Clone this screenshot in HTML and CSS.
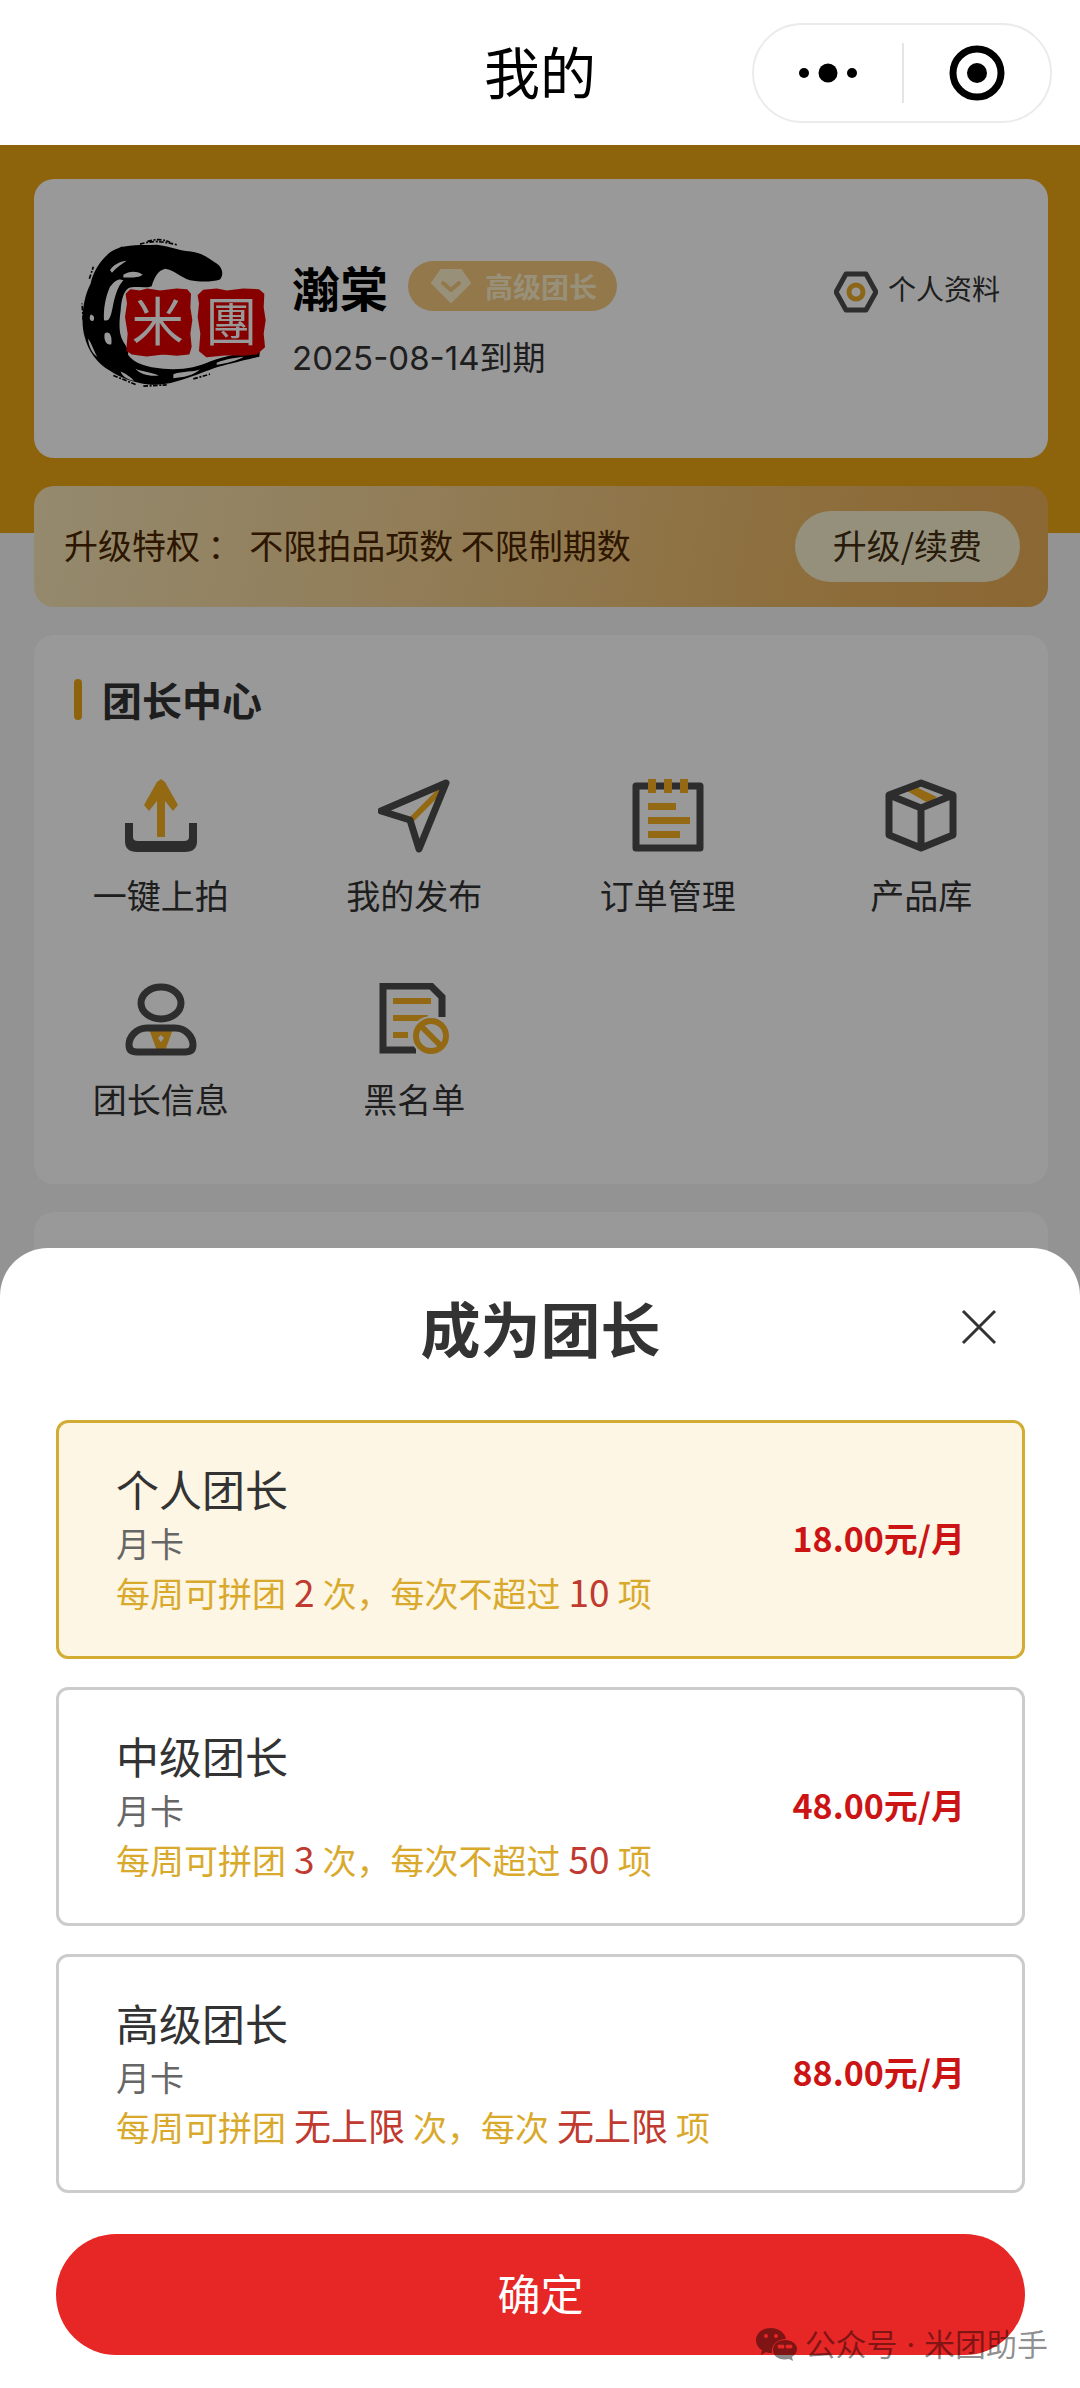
FILE: index.html
```html
<!DOCTYPE html>
<html lang="zh-CN">
<head>
<meta charset="utf-8">
<meta name="viewport" content="width=device-width, initial-scale=1">
<title>我的</title>
<link rel="stylesheet" href="styles.css">
</head>
<body>
<header class="nav">
  <h1 class="nav-title">我的</h1>
  <div class="capsule">
    <button class="capsule-btn" type="button" aria-label="更多">
      <svg width="60" height="20" viewBox="0 0 60 20"><circle cx="6" cy="10" r="5"/><circle cx="30" cy="10" r="9.5"/><circle cx="54" cy="10" r="5"/></svg>
    </button>
    <button class="capsule-btn" type="button" aria-label="关闭小程序">
      <svg width="56" height="56" viewBox="0 0 56 56"><circle cx="28" cy="28" r="24" fill="none" stroke="#000" stroke-width="7"/><circle cx="28" cy="28" r="10"/></svg>
    </button>
  </div>
</header>

<div class="stage">
  <main class="page">
    <section class="card profile">
      <svg class="avatar" viewBox="60 46 558 459" role="img" aria-label="米团">
        <path d="M92 190C100 150 130 105 165 88C200 72 250 76 290 74C330 78 352 92 392 94C430 98 450 118 470 130C488 142 492 164 480 178C455 186 420 186 390 180C360 172 345 150 315 146C295 152 285 166 275 198C255 206 225 196 205 204C190 214 184 240 182 270C178 300 176 330 184 352C192 374 208 384 204 404C222 430 262 442 310 446C370 450 410 442 450 424C500 404 560 398 600 388L598 410C570 416 530 426 490 436C450 446 420 462 380 474C340 488 300 498 260 492C220 488 180 472 150 452C110 430 84 390 74 350C62 310 66 240 92 190Z"/>
        <path class="brush" d="M150 200C166 180 176 174 190 180C172 200 164 230 158 262C152 290 148 306 132 300C130 270 136 230 150 200ZM190 164C210 150 236 154 248 164C236 174 210 172 190 172ZM134 340C146 330 158 344 154 372C142 378 130 362 134 340ZM150 150C160 134 180 124 200 122C184 134 168 142 156 158ZM92 284C100 284 106 292 100 302C90 306 86 292 92 284ZM84 356C94 366 100 390 112 410C98 402 86 380 84 356ZM226 446C250 456 280 458 296 466C270 470 240 462 226 446ZM340 462C370 452 400 456 420 448C400 466 370 472 340 474ZM470 428C500 416 530 412 552 410C530 422 500 430 470 434ZM182 454C200 462 214 472 222 482C202 478 186 468 182 454Z"/>
        <path class="splash" d="M240 72Q290 56 350 74M262 64Q300 52 330 66M150 100L190 80M88 176L100 140M70 300L66 250M160 466L230 494M250 498L320 494M400 476L450 462"/>
        <path class="seal" d="M212 210L240 214L262 208L300 214L350 208L380 210L390 222L388 262L394 300L388 340L392 380L386 400L350 404L310 400L260 406L216 400L202 390L206 340L198 290L204 250L200 222Z"/>
        <path class="seal" d="M430 212L470 208L500 214L550 208L596 210L610 222L608 262L614 300L608 340L612 380L590 400L550 404L500 402L440 408L420 392L424 340L416 290L420 250L416 226Z"/>
        <text class="seal-text" x="293" y="364" font-size="156">米</text>
        <text class="seal-text" x="514" y="364" font-size="156">團</text>
      </svg>
      <div class="who">
        <div class="name-row">
          <strong class="name">瀚棠</strong>
          <span class="badge">
            <svg width="40" height="34" viewBox="0 0 40 34"><path d="M10 1H30L39 14L20 33L1 14Z" fill="currentColor" stroke="currentColor" stroke-width="2" stroke-linejoin="round"/><path d="M12 14L20 21L28 14" fill="none" stroke="#f3c97e" stroke-width="4" stroke-linecap="round" stroke-linejoin="round"/></svg>
            高级团长
          </span>
        </div>
        <p class="expiry">2025-08-14到期</p>
      </div>
      <a class="profile-link" href="#profile">
        <svg width="44" height="42" viewBox="0 0 44 42"><path d="M12 3H32L42 21L32 39H12L2 21Z" fill="none" stroke="#4d4d4f" stroke-width="5" stroke-linejoin="round"/><circle cx="22" cy="21" r="7" fill="none" stroke="#e9aa28" stroke-width="5"/></svg>
        <span class="profile-label">个人资料</span>
      </a>
    </section>

    <section class="upgrade">
      <p class="upgrade-text">升级特权 ： 不限拍品项数 不限制期数</p>
      <button class="upgrade-btn" type="button">升级/续费</button>
    </section>

    <section class="card center">
      <h2 class="section-title">团长中心</h2>
      <nav class="grid">
        <a class="tile" href="#upload">
          <svg class="icon" viewBox="0 0 72 74"><path class="gold" d="M36 0L40 3L53 26L48 32L40 22V58H32V22L24 32L19 26L32 3Z"/><path class="ink" d="M0 44H8V58Q8 62 13 62H59Q64 62 64 58V44H72V62Q72 73 60 73H12Q0 73 0 62Z"/></svg>
          一键上拍
        </a>
        <a class="tile" href="#posts">
          <svg class="icon" viewBox="0 0 72 74"><path class="gold-line thick" d="M33 41L63 11"/><path class="ink-line" d="M68 4L3 32L32 41L41 70Z"/></svg>
          我的发布
        </a>
        <a class="tile" href="#orders">
          <svg class="icon" viewBox="0 0 72 74"><path class="ink-line" d="M4 7H68V69H4Z"/><path class="gold" d="M16 0H24V14H16ZM32 0H40V14H32ZM48 0H56V14H48ZM16 24H44V31H16ZM16 38H58V45H16ZM16 52H48V59H16Z"/></svg>
          订单管理
        </a>
        <a class="tile" href="#products">
          <svg class="icon" viewBox="0 0 72 74"><path class="gold" d="M22 12L31 8L52 18L43 24Z"/><path class="ink-line" d="M36 4L68 16V56L36 69L4 56V16ZM4 16L36 29L68 16M36 29V69"/></svg>
          产品库
        </a>
        <a class="tile" href="#leader">
          <svg class="icon" viewBox="0 0 72 74"><path class="gold" fill-rule="evenodd" d="M24 46H48L40 68H32ZM36 52L33 55L36 59L39 55Z"/><ellipse class="ink-line" cx="36" cy="20" rx="20" ry="16"/><path class="ink-line" d="M4 62C4 54 11 45 22 45H50C61 45 68 54 68 62Q68 69 60 69H12Q4 69 4 62Z"/></svg>
          团长信息
        </a>
        <a class="tile" href="#blacklist">
          <svg class="icon" viewBox="0 0 72 74"><path class="ink-line square" d="M38 67H5V3H53L64 14V34"/><path class="gold-line thick" d="M15 18H53M15 35H50M15 52H30"/><circle cx="53" cy="53" r="20" fill="#fff"/><circle class="gold-line thick" cx="53" cy="53" r="15"/><path class="gold-line thick" d="M43 43L63 63"/></svg>
          黑名单
        </a>
      </nav>
    </section>

    <section class="card rest"></section>
  </main>

  <div class="mask">
    <form class="sheet" role="dialog" aria-labelledby="sheet-title">
      <header class="sheet-head">
        <h2 class="sheet-title" id="sheet-title">成为团长</h2>
        <button class="close" type="button" aria-label="关闭">
          <svg width="36" height="36" viewBox="0 0 36 36"><path d="M2 2L34 34M34 2L2 34" stroke="#333" stroke-width="3"/></svg>
        </button>
      </header>
      <div class="plans">
        <label class="plan">
          <input class="plan-input" type="radio" name="plan" checked>
          <span class="plan-info">
            <span class="plan-name">个人团长</span>
            <span class="plan-term">月卡</span>
            <span class="plan-desc">每周可拼团<b>2</b>次，每次不超过<b>10</b>项</span>
          </span>
          <strong class="price">18.00元/月</strong>
        </label>
        <label class="plan">
          <input class="plan-input" type="radio" name="plan">
          <span class="plan-info">
            <span class="plan-name">中级团长</span>
            <span class="plan-term">月卡</span>
            <span class="plan-desc">每周可拼团<b>3</b>次，每次不超过<b>50</b>项</span>
          </span>
          <strong class="price">48.00元/月</strong>
        </label>
        <label class="plan">
          <input class="plan-input" type="radio" name="plan">
          <span class="plan-info">
            <span class="plan-name">高级团长</span>
            <span class="plan-term">月卡</span>
            <span class="plan-desc">每周可拼团<b>无上限</b>次，每次<b>无上限</b>项</span>
          </span>
          <strong class="price">88.00元/月</strong>
        </label>
      </div>
      <button class="confirm" type="submit">确定</button>
    </form>
    <div class="watermark">
      <svg width="41" height="34" viewBox="0 0 41 34"><path fill="currentColor" fill-rule="evenodd" d="M15 0C23 0 29 5 30 11C21 11 15 17 16 25C14 25 12 25 10 24L5 27L6 22C2 20 0 16 0 12C0 5 7 0 15 0ZM10 6A2 2 0 1 0 10 10A2 2 0 1 0 10 6ZM20 6A2 2 0 1 0 20 10A2 2 0 1 0 20 6ZM29 12C36 12 41 16 41 21C41 24 39 27 36 29L37 33L33 31C23 33 17 28 17 22C17 16 22 12 29 12ZM25 17A2 2 0 1 0 25 20A2 2 0 1 0 25 17ZM33 17A2 2 0 1 0 33 20A2 2 0 1 0 33 17Z"/></svg>
      <span>公众号 · 米团助手</span>
    </div>
  </div>
</div>
</body>
</html>
```
FILE: styles.css
```css
* {
  box-sizing: border-box;
}

body {
  margin: 0;
  min-height: 100vh;
  display: flex;
  flex-direction: column;
  background: #f5f5f5;
  color: #333;
  font-family: "Noto Sans CJK SC", sans-serif;
  font-size: 34px;
  line-height: 50px;
}

h1,
h2,
p {
  margin: 0;
}

button {
  padding: 0;
  border: 0;
  background: none;
  color: inherit;
  font: inherit;
}

a {
  color: inherit;
  text-decoration: none;
}

svg {
  display: block;
  flex: none;
}

/* Top bar */
.nav {
  display: grid;
  grid-template-columns: 1fr auto 1fr;
  align-items: center;
  padding: 23px 28px 22px;
  background: #fff;
  color: #000;
}

.nav-title {
  grid-column: 2;
  padding-bottom: 6px;
  font-size: 56px;
  font-weight: 400;
  line-height: 80px;
}

.capsule {
  justify-self: end;
  display: grid;
  grid-template-columns: 1fr 1fr;
  width: 300px;
  height: 100px;
  padding: 18px 0;
  border: 2px solid #ebebeb;
  border-radius: 50px;
}

.capsule-btn {
  display: flex;
  align-items: center;
  justify-content: center;
}

.capsule-btn + .capsule-btn {
  border-left: 2px solid #e5e5e5;
}

/* Page behind the sheet */
.stage {
  position: relative;
  flex: 1;
  display: flex;
  flex-direction: column;
}

.page {
  flex: 1;
  display: flex;
  flex-direction: column;
  gap: 28px;
  padding: 34px 32px 0 34px;
  background: linear-gradient(#eba714, #eba714) top / 100% 388px no-repeat;
}

.card {
  border-radius: 20px;
  background: #fff;
}

.profile {
  display: flex;
  align-items: flex-start;
  padding: 56px 48px 69px 46px;
}

.avatar {
  width: 186px;
  height: 154px;
}

.brush {
  fill: #fff;
}

.splash {
  fill: none;
  stroke: #000;
  stroke-width: 5;
  stroke-dasharray: 14 5 6 4;
}

.seal {
  fill: #e00000;
  stroke: #e00000;
  stroke-width: 6;
  stroke-linejoin: round;
}

.seal-text {
  fill: #fff;
  text-anchor: middle;
}

.who {
  flex: 1;
  display: flex;
  flex-direction: column;
  gap: 12px;
  padding: 16px 0 0 26px;
}

.name-row {
  display: flex;
  align-items: center;
  gap: 20px;
}

.name {
  color: #000;
  font-size: 48px;
  line-height: 70px;
}

.badge {
  display: flex;
  align-items: center;
  gap: 14px;
  height: 50px;
  padding: 0 20px 0 23px;
  border-radius: 25px;
  background: #f3c97e;
  color: #fff0cc;
  font-size: 28px;
  font-weight: 700;
}

.expiry {
  font-family: Inter, "Noto Sans CJK SC", sans-serif;
  font-size: 33px;
}

.profile-link {
  display: flex;
  align-items: center;
  gap: 10px;
  padding-top: 28px;
  font-size: 28px;
}

.profile-label {
  padding-bottom: 8px;
}

.upgrade {
  display: flex;
  align-items: center;
  justify-content: space-between;
  padding: 25px 28px 25px 30px;
  border-radius: 20px;
  background: linear-gradient(100deg, #f8e6b8, #f2cf90 40%, #ecb866 75%, #e8ac54);
  color: #4b2600;
}

.upgrade-text {
  padding-bottom: 4px;
}

.upgrade-btn {
  height: 71px;
  padding: 0 38px 4px;
  border-radius: 36px;
  background: #f8f1cf;
  color: #442d12;
}

.center {
  padding: 34px 0 60px;
}

.section-title {
  display: flex;
  align-items: center;
  gap: 20px;
  padding-left: 40px;
  font-size: 40px;
  line-height: 60px;
}

.section-title::before {
  content: "";
  width: 8px;
  height: 41px;
  border-radius: 4px;
  background: #eba714;
}

.grid {
  display: grid;
  grid-template-columns: repeat(4, 1fr);
  row-gap: 63px;
  padding-top: 50px;
}

.tile {
  display: flex;
  flex-direction: column;
  align-items: center;
  gap: 17px;
}

.icon {
  width: 72px;
  height: 74px;
}

.ink {
  fill: #4b4b4b;
}

.ink-line {
  fill: none;
  stroke: #4b4b4b;
  stroke-width: 7;
  stroke-linejoin: round;
}

.square {
  stroke-linejoin: miter;
}

.gold {
  fill: #f5b020;
}

.gold-line {
  fill: none;
  stroke: #f5b020;
}

.thick {
  stroke-width: 6;
}

.rest {
  flex: 1;
}

/* Bottom sheet */
.mask {
  position: absolute;
  inset: 0;
  display: flex;
  flex-direction: column;
  justify-content: flex-end;
  background: rgba(0, 0, 0, 0.4);
}

.sheet {
  padding: 0 55px 33px 56px;
  border-radius: 48px 48px 0 0;
  background: #fff;
}

.sheet-head {
  display: grid;
  grid-template-columns: 1fr auto 1fr;
  align-items: center;
  padding: 34px 28px 48px;
}

.sheet-title {
  grid-column: 2;
  font-size: 60px;
  line-height: 90px;
}

.close {
  justify-self: end;
}

.plans {
  display: flex;
  flex-direction: column;
  gap: 28px;
}

.plan {
  position: relative;
  display: flex;
  align-items: center;
  justify-content: space-between;
  padding: 35px 57px 38px;
  border: 3px solid #ccc;
  border-radius: 12px;
}

.plan:has(:checked) {
  border-color: #d2ac33;
  background: #fdf6e4;
}

.plan-input {
  position: absolute;
  inset: 0;
  margin: 0;
  opacity: 0;
}

.plan-info {
  display: flex;
  flex-direction: column;
}

.plan-name {
  font-size: 43px;
  line-height: 60px;
}

.plan-term {
  color: #666;
}

.plan-desc {
  color: #d9a92c;
}

.plan-desc b {
  margin: 0 8px;
  color: #c03a30;
  font-size: 37px;
  font-weight: 400;
  line-height: 40px;
}

.price {
  color: #cc1414;
}

.confirm {
  display: block;
  width: 100%;
  height: 121px;
  margin-top: 41px;
  padding-bottom: 6px;
  border-radius: 61px;
  background: #e72626;
  color: #fff;
  font-size: 43px;
}

.watermark {
  position: absolute;
  right: 32px;
  bottom: 20px;
  display: flex;
  align-items: center;
  gap: 8px;
  color: rgba(0, 0, 0, 0.45);
  font-family: Inter, "Noto Sans CJK SC", sans-serif;
  font-size: 31px;
  line-height: 46px;
}
```
